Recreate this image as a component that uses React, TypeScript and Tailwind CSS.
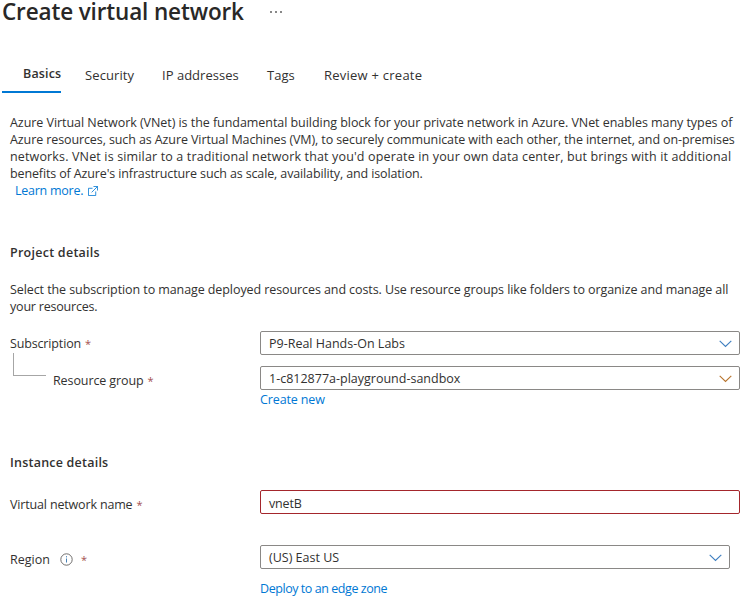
import type { ReactNode } from "react";

function Chevron({ color = "#3f7fc0" }: { color?: string }) {
  return (
    <svg className="mt-[2px]" width="13" height="8" viewBox="0 0 13 8" fill="none" stroke={color} strokeWidth="1.15">
      <path d="M0.7 0.9 6.5 6.5 12.3 0.9" />
    </svg>
  );
}

function Required() {
  return <span className="ml-1 text-[11px] tracking-normal text-[#a4504f]">*</span>;
}

function Select({ children, className, arrow }: { children: ReactNode; className: string; arrow?: string }) {
  return (
    <div className={`flex h-6 items-center justify-between rounded-[2px] border border-[#8a8886] pr-[7px] pl-2 ${className}`}>
      <span>{children}</span>
      <Chevron color={arrow} />
    </div>
  );
}

export default function App() {
  return (
    <main className="h-[602px] w-[745px] bg-white font-['Open_Sans','Noto_Sans',sans-serif] text-[12.5px] leading-[17px] whitespace-nowrap text-[#323130]">
      <header className="flex h-[26px] items-start pl-[2px]">
        <h1 className="text-[22.5px] leading-6 font-semibold tracking-[-0.14px] text-[#292827]">Create virtual network</h1>
        <div className="mt-[11px] ml-[26px] flex gap-[3px]">
          <i className="size-[2px] bg-[#888]" />
          <i className="size-[2px] bg-[#888]" />
          <i className="size-[2px] bg-[#888]" />
        </div>
      </header>

      <nav className="mt-9 flex h-[31px] pl-[2px]">
        <div className="w-[59px] border-b-2 border-[#0078d4] pt-[3px] pl-[21px] font-semibold tracking-[0.15px]">Basics</div>
        <div className="ml-6 w-[77px] pt-[5px] text-[13px] tracking-[0.1px]">Security</div>
        <div className="w-[105px] pt-[5px] text-[13px] tracking-[0.02px]">IP addresses</div>
        <div className="w-[57px] pt-[5px] text-[13px]">Tags</div>
        <div className="pt-[5px] text-[13px] tracking-[0.24px]">Review + create</div>
      </nav>

      <div className="pl-[10px]">
        <p className="mt-[21px]">
          <span className="block tracking-[-0.05px]">Azure Virtual Network (VNet) is the fundamental building block for your private network in Azure. VNet enables many types of</span>
          <span className="block tracking-[-0.1px]">Azure resources, such as Azure Virtual Machines (VM), to securely communicate with each other, the internet, and on-premises</span>
          <span className="block tracking-[0.15px]">networks. VNet is similar to a traditional network that you'd operate in your own data center, but brings with it additional</span>
          <span className="block tracking-[-0.13px]">benefits of Azure's infrastructure such as scale, availability, and isolation.</span>
        </p>
        <a className="flex h-[17px] items-center pl-[5px] tracking-[-0.25px] text-[#0078d4]">
          Learn more.
          <svg className="ml-[5px]" width="10" height="10" viewBox="0 0 11 11" fill="none" stroke="#0078d4" strokeWidth=".9">
            <path d="M5 2.5H.5v8h8V6M6 .5h4.5V5M10.5.5 4 7" />
          </svg>
        </a>

        <h2 className="mt-[45px] font-semibold tracking-[0.26px]">Project details</h2>
        <p className="mt-5">
          <span className="block tracking-[-0.085px]">Select the subscription to manage deployed resources and costs. Use resource groups like folders to organize and manage all</span>
          <span className="block tracking-[-0.2px]">your resources.</span>
        </p>

        <div className="mt-4 flex h-[35px]">
          <div className="w-[250px]">
            <div className="mt-1 tracking-[-0.15px]">Subscription<Required /></div>
            <div className="mt-[1px] ml-[3px] h-[23px] w-[33px] border-b border-l border-[#a6a6a6]" />
          </div>
          <Select className="w-[480px]">P9-Real Hands-On Labs</Select>
        </div>
        <div className="flex h-[42px]">
          <div className="w-[250px] pt-[6px] pl-[43px] tracking-[-0.1px]">Resource group<Required /></div>
          <div>
            <Select className="w-[480px]" arrow="#b8752f">1-c812877a-playground-sandbox</Select>
            <a className="mt-[1px] block tracking-[-0.12px] text-[#0078d4]">Create new</a>
          </div>
        </div>

        <h2 className="mt-[46px] font-semibold tracking-[0.22px]">Instance details</h2>
        <div className="mt-[19px] flex h-[55px]">
          <div className="w-[250px] pt-[6px] tracking-[-0.16px]">Virtual network name<Required /></div>
          <div className="flex h-6 w-[480px] items-center rounded-[2px] border border-[#a4262c] pt-[2px] pl-2 tracking-[-0.15px]">vnetB</div>
        </div>
        <div className="flex h-[35px]">
          <div className="flex w-[250px] items-start pt-[6px]">
            <span>Region</span>
            <svg className="mt-[2px] ml-[10px]" width="13" height="13" viewBox="0 0 13 13" fill="none" stroke="#605e5c">
              <circle cx="6.5" cy="6.5" r="5.7" strokeWidth=".9" />
              <path d="M6.5 5.5v4M6.5 3.2v1.2" stroke="#4681b5" />
            </svg>
            <span className="ml-1"><Required /></span>
          </div>
          <Select className="w-[470px]">(US) East US</Select>
        </div>
        <a className="block pl-[250px] tracking-[-0.44px] text-[#0078d4]">Deploy to an edge zone</a>
      </div>
    </main>
  );
}
